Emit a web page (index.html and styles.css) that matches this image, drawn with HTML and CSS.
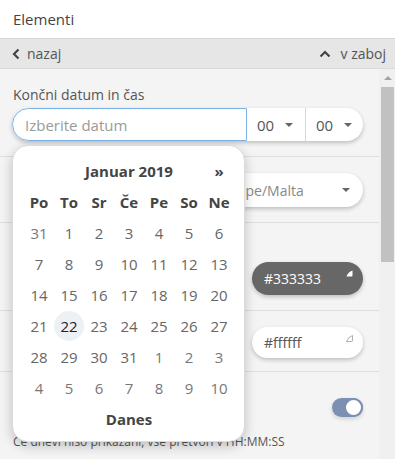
FILE: index.html
```html
<!DOCTYPE html>
<html lang="sl">
  <head>
    <meta charset="UTF-8" />
    <meta name="viewport" content="width=device-width, initial-scale=1.0" />
    <title>Elementi</title>
    <link rel="stylesheet" href="styles.css">
  </head>
  <body>
    <div class="header">Elementi</div>

    <div class="nav">
      <span class="nav-link">
        <svg width="8" height="12" viewBox="0 0 8 12"><polyline points="6.5,1.5 2,6 6.5,10.5" fill="none" stroke="#444" stroke-width="2.2"/></svg>
        nazaj
      </span>
      <span class="nav-link">
        <svg width="12" height="8" viewBox="0 0 12 8"><polyline points="1.5,6.5 6,2 10.5,6.5" fill="none" stroke="#444" stroke-width="2.2"/></svg>
        v zaboj
      </span>
    </div>

    <div class="main">
      <div class="content">
        <div class="section">
          <div class="label">Končni datum in čas</div>
          <div class="field">
            <div class="date-group">
              <input class="date-input" type="text" placeholder="Izberite datum" />
              <div class="time-select">00 <span class="caret"></span></div>
              <div class="time-select">00 <span class="caret"></span></div>
            </div>

            <div class="picker">
              <div class="picker-grid">
                <div class="picker-title">Januar 2019</div>
                <div class="picker-next">»</div>

                <div class="wd">Po</div><div class="wd">To</div><div class="wd">Sr</div><div class="wd">Če</div><div class="wd">Pe</div><div class="wd">So</div><div class="wd">Ne</div>

                <div class="day other">31</div><div class="day">1</div><div class="day">2</div><div class="day">3</div><div class="day">4</div><div class="day">5</div><div class="day">6</div>
                <div class="day">7</div><div class="day">8</div><div class="day">9</div><div class="day">10</div><div class="day">11</div><div class="day">12</div><div class="day">13</div>
                <div class="day">14</div><div class="day">15</div><div class="day">16</div><div class="day">17</div><div class="day">18</div><div class="day">19</div><div class="day">20</div>
                <div class="day">21</div><div class="day today"><span>22</span></div><div class="day">23</div><div class="day">24</div><div class="day">25</div><div class="day">26</div><div class="day">27</div>
                <div class="day">28</div><div class="day">29</div><div class="day">30</div><div class="day">31</div><div class="day other">1</div><div class="day other">2</div><div class="day other">3</div>
                <div class="day other">4</div><div class="day other">5</div><div class="day other">6</div><div class="day other">7</div><div class="day other">8</div><div class="day other">9</div><div class="day other">10</div>

                <div class="picker-today">Danes</div>
              </div>
            </div>
          </div>
        </div>

        <div class="section row">
          <div class="label">Časovni pas</div>
          <div class="select">Europe/Malta <span class="caret"></span></div>
        </div>

        <div class="section">
          <div class="label">Barve</div>
          <div class="row">
            <div class="sub-label">Besedilo</div>
            <div class="color-input dark">
              #333333
              <svg class="color-icon" width="7" height="7" viewBox="0 0 7 7"><path d="M6.5 0.5 L6.5 5.5 Q6.5 6.5 5.5 6.5 L0.5 6.5 Q2 2 6.5 0.5 Z" fill="#fff"/></svg>
            </div>
          </div>
        </div>

        <div class="section row short">
          <div class="sub-label">Ozadje</div>
          <div class="color-input">
            #ffffff
            <svg class="color-icon" width="7" height="7" viewBox="0 0 7 7"><path d="M6.5 0.5 L6.5 5.5 Q6.5 6.5 5.5 6.5 L0.5 6.5 Q2 2 6.5 0.5 Z" fill="none" stroke="#999" stroke-width="0.8"/></svg>
          </div>
        </div>

        <div class="section">
          <div class="row toggle-row">
            <div class="sub-label">Prikaži dneve</div>
            <div class="toggle"><span class="knob"></span></div>
          </div>
          <div class="help">Če dnevi niso prikazani, vse pretvori v HH:MM:SS</div>
        </div>
      </div>

      <!-- page scrollbar -->
      <div class="scrollbar">
        <div class="scroll-up"><span class="arrow-up"></span></div>
        <div class="scroll-thumb"></div>
      </div>
    </div>
  </body>
</html>
```

FILE: styles.css
```css
* {
  box-sizing: border-box;
}
html,
body {
  margin: 0;
  padding: 0;
  height: 100%;
  overflow: hidden;
}
body {
  font-family: "Open Sans", "DejaVu Sans", sans-serif;
  color: #555;
  background: #f4f4f4;
}
.header {
  height: 38px;
  padding: 0 13px;
  display: flex;
  align-items: center;
  background: #fff;
  color: #444;
  font-size: 15px;
}
.nav {
  height: 31px;
  padding: 0 9px 0 12px;
  display: flex;
  align-items: center;
  justify-content: space-between;
  background: #e6e6e6;
  border-top: 1px solid #d8d8d8;
  border-bottom: 1px solid #dadada;
  font-size: 14px;
  color: #555;
}
.nav-link {
  display: flex;
  align-items: center;
  gap: 7px;
}
.nav-link:last-child {
  gap: 10px;
}
.main {
  display: flex;
  height: calc(100% - 69px);
}
.content {
  flex: 1;
  min-width: 0;
  overflow: hidden;
  background: #f4f4f4;
}
.scrollbar {
  width: 16px;
  background: #f0f0f0;
}
.scroll-up {
  height: 18px;
  display: flex;
  align-items: center;
  justify-content: center;
  padding-left: 1px;
}
.arrow-up {
  width: 0;
  height: 0;
  border-left: 4px solid transparent;
  border-right: 4px solid transparent;
  border-bottom: 4px solid #a3a3a3;
}
.scroll-thumb {
  height: 175px;
  margin: 0 1px 0 2px;
  background: #c1c1c1;
}
.section {
  padding: 16px 16px 15px 12px;
  border-bottom: 1px solid #dedede;
}
.row {
  display: flex;
  align-items: center;
  justify-content: space-between;
}
.section.short {
  padding-bottom: 13px;
}
.label {
  font-size: 14px;
  line-height: 20px;
  color: #555;
  margin-bottom: 3px;
  padding-left: 1px;
}
.row > .label {
  margin-bottom: 0;
}
.sub-label {
  font-size: 14px;
  color: #555;
}
.field {
  position: relative;
}
.date-group {
  display: flex;
  height: 33px;
  border-radius: 17px;
  background: #fff;
  box-shadow: 0 2px 4px rgba(0, 0, 0, 0.22);
}
.date-input {
  flex: 1;
  min-width: 0;
  height: 33px;
  border: 1px solid #7bb2e5;
  border-radius: 17px 0 0 17px;
  padding: 0 12px;
  font-family: inherit;
  font-size: 15px;
  color: #555;
  outline: none;
}
.date-input::placeholder {
  color: #9a9a9a;
}
.time-select {
  width: 58px;
  display: flex;
  align-items: center;
  padding-left: 10px;
  gap: 11px;
  font-size: 15px;
  color: #555;
  border-left: 1px solid #d6d6d6;
}
.time-select:first-of-type {
  border-left: none;
}
.caret {
  width: 0;
  height: 0;
  border-left: 4px solid transparent;
  border-right: 4px solid transparent;
  border-top: 4px solid #666;
}
.picker {
  position: absolute;
  top: calc(100% + 4px);
  left: 0;
  width: 233px;
  padding: 9px 12px 7px 11px;
  background: #fff;
  border: 1px solid #dcdcdc;
  border-radius: 16px;
  box-shadow: 0 4px 12px rgba(0, 0, 0, 0.22);
  z-index: 5;
}
.picker-grid {
  display: grid;
  grid-template-columns: repeat(7, 30px);
  grid-auto-rows: 31px;
  align-items: center;
  justify-items: center;
  font-size: 15px;
}
.picker-title {
  grid-column: 2 / 7;
  font-weight: bold;
  color: #444;
}
.picker-next {
  grid-column: 7;
  font-weight: bold;
  color: #444;
}
.wd {
  font-weight: bold;
  color: #444;
}
.day {
  color: #666;
}
.day.other {
  color: #777;
}
.today span {
  display: flex;
  width: 30px;
  height: 30px;
  border-radius: 50%;
  align-items: center;
  justify-content: center;
  background: #edf0f5;
  color: #222;
}
.picker-today {
  grid-column: 1 / 8;
  font-weight: bold;
  color: #444;
}
.select {
  width: 161px;
  height: 34px;
  padding: 0 13px;
  display: flex;
  align-items: center;
  justify-content: space-between;
  background: #fff;
  border-radius: 17px;
  box-shadow: 0 2px 4px rgba(0, 0, 0, 0.22);
  font-size: 14px;
  color: #888;
}
.color-input {
  width: 111px;
  height: 33px;
  padding: 0 10px 0 12px;
  display: flex;
  align-items: center;
  justify-content: space-between;
  background: #fff;
  border-radius: 17px;
  box-shadow: 0 2px 4px rgba(0, 0, 0, 0.22);
  font-size: 14px;
  color: #555;
}
.section.short .color-input {
  height: 31px;
}
.color-input.dark {
  background: #676767;
  color: #fff;
}
.color-icon {
  align-self: flex-start;
  margin-top: 8px;
}
.toggle-row {
  height: 38px;
}
.toggle {
  width: 31px;
  height: 19px;
  display: flex;
  justify-content: flex-end;
  background: #7b90b3;
  border-radius: 10px;
  box-shadow: 0 2px 4px rgba(0, 0, 0, 0.15);
}
.knob {
  width: 19px;
  height: 19px;
  border-radius: 50%;
  background: #fff;
  border: 2px solid #7b90b3;
}
.help {
  margin-top: 8px;
  font-size: 12px;
  line-height: 16px;
  color: #555;
  padding-left: 1px;
}
```
